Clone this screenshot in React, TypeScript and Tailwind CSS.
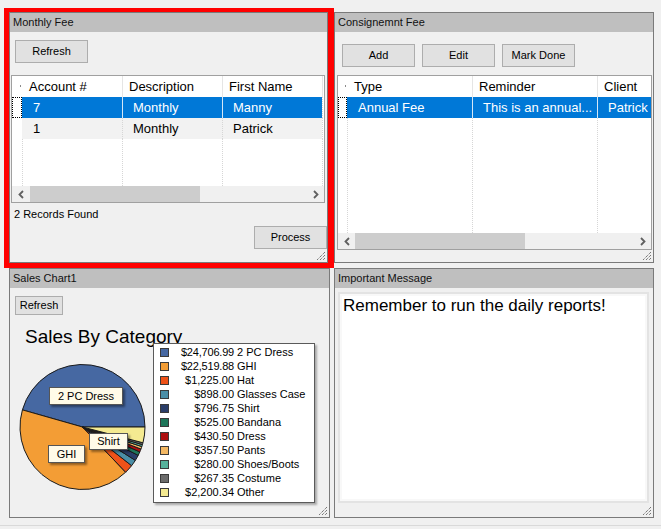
import React from 'react';

type Col = { label: string; w: string };

const slices = [
  { label: '2 PC Dress', amount: 24706.99, text: '$24,706.99', fill: '#4668a2', sw: 'bg-[#4668a2]', tight: true },
  { label: 'GHI', amount: 22519.88, text: '$22,519.88', fill: '#f39d35', sw: 'bg-[#f39d35]', tight: true },
  { label: 'Hat', amount: 1225, text: '$1,225.00', fill: '#ee5219', sw: 'bg-[#ee5219]', tight: false },
  { label: 'Glasses Case', amount: 898, text: '$898.00', fill: '#4b8ea6', sw: 'bg-[#4b8ea6]', tight: false },
  { label: 'Shirt', amount: 796.75, text: '$796.75', fill: '#2a3d68', sw: 'bg-[#2a3d68]', tight: false },
  { label: 'Bandana', amount: 525, text: '$525.00', fill: '#1d7659', sw: 'bg-[#1d7659]', tight: false },
  { label: 'Dress', amount: 430.5, text: '$430.50', fill: '#ad0f10', sw: 'bg-[#ad0f10]', tight: false },
  { label: 'Pants', amount: 357.5, text: '$357.50', fill: '#f3b863', sw: 'bg-[#f3b863]', tight: false },
  { label: 'Shoes/Boots', amount: 280, text: '$280.00', fill: '#56b19b', sw: 'bg-[#56b19b]', tight: false },
  { label: 'Costume', amount: 267.35, text: '$267.35', fill: '#6b6b6b', sw: 'bg-[#6b6b6b]', tight: false },
  { label: 'Other', amount: 2200.34, text: '$2,200.34', fill: '#f4ea91', sw: 'bg-[#f4ea91]', tight: false },
];

function piePaths(cx: number, cy: number, r: number) {
  const total = slices.reduce((s, x) => s + x.amount, 0);
  let a = 0;
  return slices.map((s) => {
    const a0 = a;
    const a1 = a + (s.amount / total) * Math.PI * 2;
    a = a1;
    const x0 = cx + r * Math.cos(a0);
    const y0 = cy - r * Math.sin(a0);
    const x1 = cx + r * Math.cos(a1);
    const y1 = cy - r * Math.sin(a1);
    const large = a1 - a0 > Math.PI ? 1 : 0;
    return { d: `M${cx} ${cy} L${x0} ${y0} A${r} ${r} 0 ${large} 0 ${x1} ${y1} Z`, fill: s.fill };
  });
}

function Grip() {
  return (
    <svg className="absolute bottom-[1px] right-[1px]" width="10" height="10" viewBox="0 0 10 10">
      <path d="M9 1 L1 9 M9 4 L4 9 M9 7 L7 9" stroke="#444" strokeWidth="1" strokeDasharray="1 1" fill="none" />
    </svg>
  );
}

function Chevron({ left }: { left?: boolean }) {
  return (
    <svg width="6" height="9" viewBox="0 0 6 9">
      <polyline points={left ? '5,1 1.5,4.5 5,8' : '1,1 4.5,4.5 1,8'} fill="none" stroke="#606060" strokeWidth="1.8" />
    </svg>
  );
}

function Panel({ title, className, children }: { title: string; className?: string; children?: React.ReactNode }) {
  return (
    <div className={`relative flex flex-col border border-[#7a7a7a] bg-[#f0f0f0] ${className ?? ''}`}>
      <div className="h-[19px] shrink-0 bg-[#bfbfbf] pl-[3px] text-[11px] leading-[19px] text-[#111]">{title}</div>
      <div className="relative flex flex-1 flex-col">{children}</div>
      <Grip />
    </div>
  );
}

function Btn({ label, className }: { label: string; className?: string }) {
  return (
    <div className={`flex shrink-0 items-center justify-center border border-[#adadad] bg-[#e1e1e1] text-[11px] text-black ${className ?? ''}`}>
      {label}
    </div>
  );
}

function DataGrid({
  cols,
  rows,
  size,
  headW,
  filler,
  thumbGap,
}: {
  cols: Col[];
  rows: string[][];
  size: string;
  headW: string;
  filler?: boolean;
  thumbGap: string;
}) {
  return (
    <div className={`flex flex-col overflow-hidden border border-[#a0a0a0] bg-white ${size}`}>
      {/* header */}
      <div className="flex h-[21px] shrink-0 text-[13px] leading-[21px]">
        <div className={`relative shrink-0 ${headW}`}>
          <div className="absolute right-[1px] top-[9px] h-[2px] w-px bg-[#8a8a8a]" />
        </div>
        {cols.map((c, j) => (
          <div
            key={c.label}
            className={`shrink-0 whitespace-nowrap border-l pl-[6px] ${j === 0 ? 'border-transparent' : 'border-[#e5e5e5]'} ${c.w}`}
          >
            {c.label}
          </div>
        ))}
        {filler && <div className="w-[2px] shrink-0 border-l border-[#e5e5e5]" />}
      </div>

      {/* data rows */}
      {rows.map((r, i) => {
        const sel = i === 0;
        return (
          <div key={i} className="flex h-[21px] shrink-0 text-[13px] leading-[21px]">
            <div className={`shrink-0 ${headW} ${sel ? 'border border-dotted border-black' : ''}`} />
            {cols.map((c, j) => (
              <div
                key={c.label}
                className={`shrink-0 whitespace-nowrap border-l pl-[10px] ${c.w} ${
                  sel
                    ? `bg-[#0078d7] text-white ${j === 0 ? 'border-transparent' : 'border-[#d5e7f7]'}`
                    : `bg-[#f2f2f2] border-dotted ${j === 0 ? 'border-transparent' : 'border-[#d6d6d6]'}`
                }`}
              >
                {r[j]}
              </div>
            ))}
            {filler && <div className="w-[2px] shrink-0 border-l border-dotted border-[#d6d6d6]" />}
          </div>
        );
      })}

      {/* empty body */}
      <div className="flex min-h-0 flex-1">
        <div className={`shrink-0 ${headW}`} />
        {cols.map((c) => (
          <div key={c.label} className={`shrink-0 border-l border-dotted border-[#d6d6d6] ${c.w}`} />
        ))}
        {filler && <div className="w-[2px] shrink-0 border-l border-dotted border-[#d6d6d6]" />}
      </div>

      {/* horizontal scrollbar */}
      <div className="flex h-[16px] shrink-0 items-center bg-[#f0f0f0]">
        <div className="flex w-[17px] shrink-0 justify-center">
          <Chevron left />
        </div>
        <div className={`h-full w-[170px] shrink-0 bg-[#cdcdcd] ${thumbGap}`} />
        <div className="flex-1" />
        <div className="flex w-[17px] shrink-0 justify-center">
          <Chevron />
        </div>
      </div>
    </div>
  );
}

function SalesChart() {
  const paths = piePaths(64.5, 65, 62.5);
  return (
    <>
      <div className="absolute left-[15px] top-[38px] whitespace-nowrap text-[19px] leading-[22px] text-black">Sales By Category</div>

      <svg className="absolute left-[8px] top-[74px]" width="130" height="130" viewBox="0 0 130 130">
        {paths.map((p, i) => (
          <path key={i} d={p.d} fill={p.fill} stroke="#1a1a1a" strokeWidth="1" strokeLinejoin="round" />
        ))}
      </svg>

      {/* slice labels */}
      <div className="absolute left-[39px] top-[99px] flex h-[18px] w-[74px] items-center justify-center border border-[#555] bg-[#fffbe8] text-[11px] shadow-[2px_2px_2px_rgba(0,0,0,0.4)]">
        2 PC Dress
      </div>
      <div className="absolute left-[38px] top-[157px] flex h-[18px] w-[37px] items-center justify-center border border-[#555] bg-[#fffbe8] text-[11px] shadow-[2px_2px_2px_rgba(0,0,0,0.4)]">
        GHI
      </div>
      <div className="absolute left-[79px] top-[145px] flex h-[17px] w-[39px] items-center justify-center border border-[#555] bg-[#fffbe8] text-[11px] shadow-[2px_2px_2px_rgba(0,0,0,0.4)]">
        Shirt
      </div>

      {/* legend */}
      <div className="absolute left-[143px] top-[55px] h-[160px] w-[162px] border border-[#5a5a5a] bg-white pt-[1px] shadow-[2px_2px_2px_rgba(0,0,0,0.3)]">
        {slices.map((s) => (
          <div key={s.label} className="flex h-[14px] items-center whitespace-nowrap text-[11px] leading-[14px] text-black">
            <div className={`ml-[6px] h-[9px] w-[9px] shrink-0 border border-[#3a3a3a] ${s.sw}`} />
            <div className={`w-[65px] shrink-0 text-right ${s.tight ? 'tracking-[-0.2px]' : ''}`}>{s.text}</div>
            <div className="pl-[3px]">{s.label}</div>
          </div>
        ))}
      </div>
    </>
  );
}

export default function App() {
  return (
    <div className="relative h-[529px] w-[661px] overflow-hidden bg-[#f0f0f0] font-['Liberation_Sans',Arial,sans-serif] text-black">
      <div className="grid grid-cols-[321px_320px] grid-rows-[251px_250px] gap-x-[4px] gap-y-[5px] pl-[9px] pt-[12px]">
        <Panel title="Monthly Fee" className="w-[319px]">
          <Btn label="Refresh" className="ml-[5px] mt-[8px] h-[23px] w-[73px]" />
          <div className="ml-[1px] mt-[12px]">
            <DataGrid
              size="h-[128px] w-[314px]"
              headW="w-[10px]"
              filler
              thumbGap="ml-[1px]"
              cols={[
                { label: 'Account #', w: 'w-[100px]' },
                { label: 'Description', w: 'w-[100px]' },
                { label: 'First Name', w: 'w-[100px]' },
              ]}
              rows={[
                ['7', 'Monthly', 'Manny'],
                ['1', 'Monthly', 'Patrick'],
              ]}
            />
          </div>
          <div className="ml-[4px] mt-[4px] text-[11px] leading-[14px]">2 Records Found</div>
          <Btn label="Process" className="mt-[5px] h-[23px] w-[73px] self-end" />
        </Panel>

        <Panel title="Consignemnt Fee">
          <div className="ml-[7px] mt-[12px] flex gap-[7px]">
            <Btn label="Add" className="h-[23px] w-[73px]" />
            <Btn label="Edit" className="h-[23px] w-[73px]" />
            <Btn label="Mark Done" className="h-[23px] w-[73px]" />
          </div>
          <div className="ml-[2px] mt-[8px]">
            <DataGrid
              size="h-[175px] w-[315px]"
              headW="w-[9px]"
              thumbGap="ml-0"
              cols={[
                { label: 'Type', w: 'w-[125px]' },
                { label: 'Reminder', w: 'w-[125px]' },
                { label: 'Client', w: 'w-[70px]' },
              ]}
              rows={[['Annual Fee', 'This is an annual...', 'Patrick']]}
            />
          </div>
        </Panel>

        <Panel title="Sales Chart1">
          <Btn label="Refresh" className="ml-[5px] mt-[8px] h-[19px] w-[48px]" />
          <SalesChart />
        </Panel>

        <Panel title="Important Message">
          <div className="ml-[3px] mt-[4px] h-[211px] w-[311px] border-2 border-[#e3e3e3] bg-[#f8f8f8] p-[2px]">
            <div className="h-full bg-white pl-[1px] text-[17px] leading-[20px] text-black">Remember to run the daily reports!</div>
          </div>
        </Panel>
      </div>

      <div className="mt-[7px] h-px bg-[#d9d9d9]" />

      {/* red highlight around the Monthly Fee panel */}
      <div className="pointer-events-none absolute left-[4px] top-[8px] h-[260px] w-[330px] border-b-[5px] border-l-[5px] border-r-[6px] border-t-[4px] border-[#ff0000]" />
    </div>
  );
}
